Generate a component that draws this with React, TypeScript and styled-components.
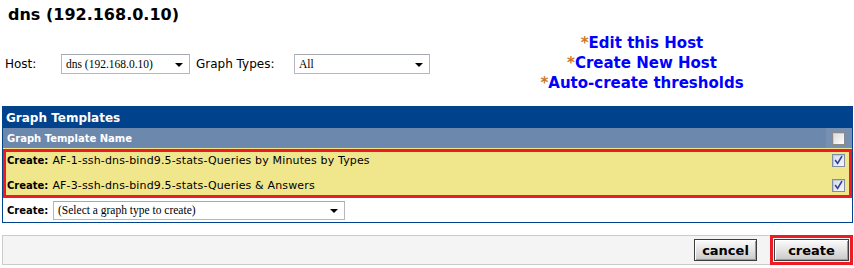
import React from 'react';
import styled, { createGlobalStyle } from 'styled-components';

const GlobalStyle = createGlobalStyle`
  html, body { margin: 0; padding: 0; background: #ffffff; }
  body {
    font-family: Verdana, "DejaVu Sans", sans-serif;
    font-size: 11px;
    color: #000;
    width: 854px;
    height: 268px;
    overflow: hidden;
  }
`;

const Page = styled.div`
  display: flex;
  flex-direction: column;
  width: 854px;
`;

const Top = styled.div`
  display: flex;
  height: 106px;
`;

const TopLeft = styled.div`
  flex: 0 0 430px;
  display: flex;
  flex-direction: column;
`;

const Title = styled.div`
  font-size: 16px;
  font-weight: bold;
  line-height: 20px;
  padding: 5px 0 0 8px;
`;

const FormRow = styled.div`
  display: flex;
  align-items: center;
  height: 20px;
  margin-top: 29px;
  padding-left: 5px;
  font-size: 12px;
`;

const FieldLabel = styled.span<{ $w: number }>`
  width: ${p => p.$w}px;
  flex: 0 0 auto;
  white-space: nowrap;
`;

const SelectBox = styled.div<{ $w: number; $h: number }>`
  position: relative;
  box-sizing: border-box;
  width: ${p => p.$w}px;
  height: ${p => p.$h}px;
  border: 1px solid #b4b7bd;
  border-top-color: #a5a9b0;
  background: #fff;
  display: flex;
  align-items: center;
  padding-left: 4px;
  font-family: "Liberation Serif", "Times New Roman", serif;
  font-size: 11.5px;
  color: #000;
  flex: 0 0 auto;
  white-space: nowrap;
`;

const Arrow = styled.span`
  position: absolute;
  right: 6px;
  top: 50%;
  margin-top: -1px;
  width: 0;
  height: 0;
  border-left: 4px solid transparent;
  border-right: 4px solid transparent;
  border-top: 4px solid #000;
`;

const Spacer = styled.span<{ $w: number }>`
  width: ${p => p.$w}px;
  flex: 0 0 auto;
`;

const TopRight = styled.div`
  flex: 1;
  display: flex;
  flex-direction: column;
  align-items: center;
  padding-top: 33px;
`;

const LinkLine = styled.a`
  font-size: 15px;
  font-weight: bold;
  line-height: 20px;
  color: #0000ff;
  text-decoration: none;
  white-space: nowrap;
`;

const Star = styled.span`
  color: #c8792a;
`;

const Table = styled.div`
  margin-left: 2px;
  width: 851px;
  box-sizing: border-box;
  border: 1px solid #00438c;
  display: flex;
  flex-direction: column;
`;

const HeaderBar = styled.div`
  height: 21px;
  background: #00438c;
  color: #fff;
  font-size: 12px;
  font-weight: bold;
  display: flex;
  align-items: center;
  padding-left: 3px;
`;

const SubHeader = styled.div`
  height: 20px;
  background: #6d88ad;
  color: #fff;
  font-size: 10px;
  font-weight: bold;
  display: flex;
  align-items: stretch;
`;

const SubHeaderName = styled.div`
  flex: 1;
  display: flex;
  align-items: center;
  padding-left: 4px;
`;

const SubHeaderCheckCell = styled.div`
  flex: 0 0 26px;
  background: #7690b4;
  display: flex;
  align-items: center;
  justify-content: flex-start;
  padding-left: 6px;
  box-sizing: border-box;
`;

const SelectedGroup = styled.div`
  position: relative;
  &::after {
    content: '';
    position: absolute;
    left: 0;
    right: 0;
    top: 1px;
    bottom: 0;
    border: 3px solid #ed1c24;
    pointer-events: none;
  }
`;

const TemplateRow = styled.div`
  height: 25px;
  background: #f0e68c;
  display: flex;
  align-items: center;
  padding-left: 4px;
  padding-right: 7px;
  font-size: 11px;
`;

const RowText = styled.span`
  flex: 1;
  white-space: nowrap;
  letter-spacing: 0.15px;
`;

const BoldLabel = styled.b`
  font-size: 10px;
  font-weight: bold;
  margin-right: 4px;
  letter-spacing: 0;
`;

const CheckBox = styled.span<{ $checked?: boolean }>`
  box-sizing: border-box;
  width: 13px;
  height: 13px;
  border: 1px solid ${p => (p.$checked ? '#7f8ea6' : '#8a8a8a')};
  background: ${p =>
    p.$checked
      ? 'linear-gradient(135deg, #d6dbe4 0%, #f6f7f9 100%)'
      : 'linear-gradient(135deg, #d9d9d9 0%, #ffffff 100%)'};
  box-shadow: inset 1px 1px 0 ${p => (p.$checked ? '#c3c9d5' : '#cfcfcf')};
  display: inline-flex;
  align-items: center;
  justify-content: center;
  flex: 0 0 auto;
`;

const CreateRow = styled.div`
  height: 24px;
  background: #fff;
  display: flex;
  align-items: center;
  padding-left: 4px;
  font-size: 11px;
`;

const CreateLabel = styled.b`
  font-size: 10px;
  font-weight: bold;
  width: 46px;
  flex: 0 0 auto;
`;

const ButtonBar = styled.div`
  margin-top: 12px;
  margin-left: 2px;
  width: 851px;
  height: 30px;
  box-sizing: border-box;
  border: 1px solid #cbcbcb;
  background: #f4f4f4;
  display: flex;
  align-items: center;
  justify-content: flex-end;
  padding-right: 3px;
  gap: 17px;
`;

const Button = styled.button<{ $w: number }>`
  box-sizing: border-box;
  width: ${p => p.$w}px;
  height: 22px;
  padding: 0;
  font-family: Verdana, "DejaVu Sans", sans-serif;
  font-size: 13px;
  font-weight: bold;
  color: #000;
  border: 1px solid #3d3d3d;
  background: linear-gradient(#fbfbfb 0%, #e6e6e6 45%, #c9c9c9 100%);
  box-shadow: inset 1px 1px 0 #ffffff, inset -1px -1px 0 #9a9a9a;
  cursor: pointer;
`;

const Highlight = styled.span`
  position: relative;
  display: inline-flex;
  &::after {
    content: '';
    position: absolute;
    inset: -4px;
    border: 3px solid #ed1c24;
    pointer-events: none;
  }
`;

const CheckMark = () => (
  <svg width="11" height="11" viewBox="0 0 11 11">
    <path d="M2.6 5.6 L4.6 8.4 L8.6 1.8" fill="none" stroke="#2a3f9e" strokeWidth="1.6" strokeLinecap="square" />
  </svg>
);

const rows = [
  'AF-1-ssh-dns-bind9.5-stats-Queries by Minutes by Types',
  'AF-3-ssh-dns-bind9.5-stats-Queries & Answers',
];

export default function App() {
  return (
    <Page>
      <GlobalStyle />
      <Top>
        <TopLeft>
          <Title>dns (192.168.0.10)</Title>
          <FormRow>
            <FieldLabel $w={56}>Host:</FieldLabel>
            <SelectBox $w={129} $h={20}>
              dns (192.168.0.10)
              <Arrow />
            </SelectBox>
            <Spacer $w={6} />
            <FieldLabel $w={98}>Graph Types:</FieldLabel>
            <SelectBox $w={136} $h={20}>
              All
              <Arrow />
            </SelectBox>
          </FormRow>
        </TopLeft>
        <TopRight>
          <LinkLine href="#">
            <Star>*</Star>Edit this Host
          </LinkLine>
          <LinkLine href="#">
            <Star>*</Star>Create New Host
          </LinkLine>
          <LinkLine href="#">
            <Star>*</Star>Auto-create thresholds
          </LinkLine>
        </TopRight>
      </Top>

      <Table>
        <HeaderBar>Graph Templates</HeaderBar>
        <SubHeader>
          <SubHeaderName>Graph Template Name</SubHeaderName>
          <SubHeaderCheckCell>
            <CheckBox />
          </SubHeaderCheckCell>
        </SubHeader>
        <SelectedGroup>
          {rows.map(r => (
            <TemplateRow key={r}>
              <RowText>
                <BoldLabel>Create:</BoldLabel>
                {r}
              </RowText>
              <CheckBox $checked>
                <CheckMark />
              </CheckBox>
            </TemplateRow>
          ))}
        </SelectedGroup>
        <CreateRow>
          <CreateLabel>Create:</CreateLabel>
          <SelectBox $w={292} $h={19}>
            (Select a graph type to create)
            <Arrow />
          </SelectBox>
        </CreateRow>
      </Table>

      <ButtonBar>
        <Button $w={63}>cancel</Button>
        <Highlight>
          <Button $w={75}>create</Button>
        </Highlight>
      </ButtonBar>
    </Page>
  );
}
